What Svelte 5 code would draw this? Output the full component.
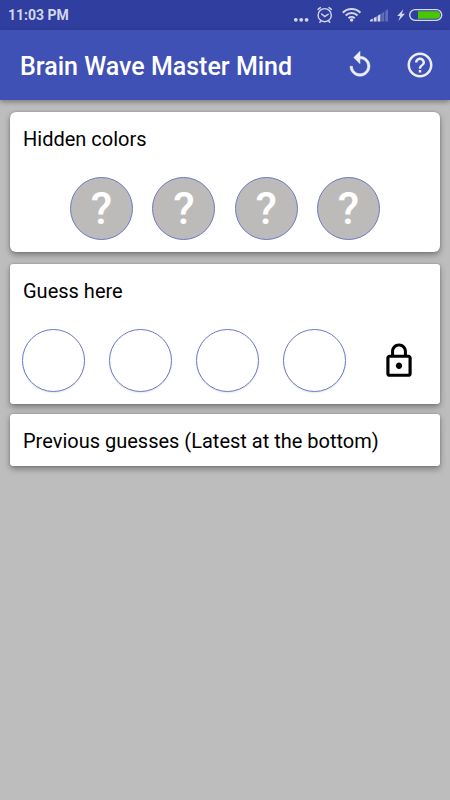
<script lang="ts">
    let hidden = $state(["?", "?", "?", "?"]);
    let guess = $state(["", "", "", ""]);

    function reset() {
        guess = guess.map(() => "");
    }
</script>

<div class="screen">
    <div class="status">
        <span class="time">11:03 PM</span>
        <svg class="system" viewBox="0 0 156 30" width="156" height="30" aria-hidden="true">
            <g fill="#d3d6ec">
                <circle cx="1.8" cy="19.8" r="1.9" />
                <circle cx="7.2" cy="19.8" r="1.9" />
                <circle cx="12.6" cy="19.8" r="1.9" />
            </g>
            <!-- alarm -->
            <g fill="none" stroke="#d3d6ec" stroke-width="1.4" stroke-linecap="round">
                <circle cx="30.7" cy="15.2" r="6.6" />
                <path d="M24 9.4 26.4 7.6M37.4 9.4 35 7.6M27.6 14l3.2 2.6 3.4-2.4M27 21l-1.2 1.2M34.6 21l1.2 1.2" />
            </g>
            <!-- wifi -->
            <g fill="none" stroke="#d3d6ec" stroke-width="2">
                <path d="M48.8 12.8a12.2 12.2 0 0 1 17.6 0" />
                <path d="M51.7 15.5a8.4 8.4 0 0 1 11.8 0" />
                <path d="M54.5 18.2a4.6 4.6 0 0 1 6.2 0" />
            </g>
            <circle cx="57.6" cy="20" r="1.7" fill="#d3d6ec" />
            <!-- signal -->
            <g fill="#d3d6ec">
                <path d="M76 21.5v-1.6l2.8-1.3v2.9zM79.8 21.5v-3.4l2.8-1.6v5zM83.6 21.5v-5.6l2.8-1.8v7.4z" />
                <path opacity=".3" d="M87.4 21.5v-8l2.8-1.8v9.8zM91.2 21.5V11l2.8-2v12.5z" />
            </g>
            <path d="M109.4 9.2l-6.2 6.8h3l-1.8 5 6.6-7.2h-3.2z" fill="#d3d6ec" />
            <!-- battery -->
            <rect x="115.7" y="9.6" width="32" height="10.8" rx="5.4" fill="none" stroke="#d3d6ec" stroke-width="1.4" />
            <path d="M124 11.2h18.4a3.8 3.8 0 0 1 0 7.6H124z" fill="#49c600" />
        </svg>
    </div>

    <header>
        <h1>Brain Wave Master Mind</h1>
        <button class="action" aria-label="Restart" onclick={reset}>
            <svg class="restart" viewBox="0 0 24 24" width="30" height="30">
                <path d="M12 5V1L7 6l5 5V7c3.31 0 6 2.69 6 6s-2.69 6-6 6-6-2.69-6-6H4c0 4.42 3.58 8 8 8s8-3.58 8-8-3.58-8-8-8z" />
            </svg>
        </button>
        <button class="action" aria-label="Help">
            <svg viewBox="0 0 24 24" width="30" height="30">
                <path d="M11 18h2v-2h-2v2zm1-16C6.48 2 2 6.48 2 12s4.48 10 10 10 10-4.48 10-10S17.52 2 12 2zm0 18c-4.41 0-8-3.59-8-8s3.59-8 8-8 8 3.59 8 8-3.59 8-8 8zm0-14c-2.21 0-4 1.79-4 4h2c0-1.1.9-2 2-2s2 .9 2 2c0 2-3 1.75-3 5h2c0-2.25 3-2.5 3-5 0-2.21-1.79-4-4-4z" />
            </svg>
        </button>
    </header>

    <main>
        <section class="card rounded">
            <h2>Hidden colors</h2>
            <div class="pegs hidden">
                {#each hidden as mark}
                    <span class="peg">{mark}</span>
                {/each}
            </div>
        </section>

        <section class="card">
            <h2>Guess here</h2>
            <div class="pegs">
                {#each guess as _, i}
                    <button class="peg empty" aria-label={`Guess color ${i + 1}`}></button>
                {/each}
                <button class="lock" aria-label="Lock guess">
                    <svg viewBox="0 0 24 24" width="38" height="38">
                        <path d="M12 17c1.1 0 2-.9 2-2s-.9-2-2-2-2 .9-2 2 .9 2 2 2zm6-9h-1V6c0-2.76-2.24-5-5-5S7 3.24 7 6v2H6c-1.1 0-2 .9-2 2v10c0 1.1.9 2 2 2h12c1.1 0 2-.9 2-2V10c0-1.1-.9-2-2-2zM8.9 6c0-1.71 1.39-3.1 3.1-3.1s3.1 1.39 3.1 3.1v2H8.9V6zM18 20H6V10h12v10z" />
                    </svg>
                </button>
            </div>
        </section>

        <section class="card previous">
            <h2>Previous guesses (Latest at the bottom)</h2>
        </section>
    </main>
</div>

<style>
    :global(body) {
        background: #bdbdbd;
    }

    .screen {
        font-family: Roboto, sans-serif;
        color: #000;
    }

    .status {
        display: flex;
        align-items: center;
        justify-content: space-between;
        height: 30px;
        padding-left: 8px;
        background: #303f9f;
    }
    .time {
        color: #d3d6ec;
        font-size: 14px;
        font-weight: 700;
    }
    .system {
        display: block;
    }

    header {
        display: flex;
        align-items: center;
        height: 70px;
        padding-left: 20px;
        background: #3f51b5;
        box-shadow: 0 2px 5px rgba(0, 0, 0, 0.35);
    }
    h1 {
        flex: 1;
        margin: 0;
        padding-top: 4px;
        color: #fff;
        font-size: 25px;
        font-weight: 500;
        line-height: 32px;
    }

    button {
        display: flex;
        align-items: center;
        justify-content: center;
        padding: 0;
        border: 0;
        background: none;
        cursor: pointer;
    }
    .action {
        width: 60px;
        height: 60px;
    }
    .action svg {
        fill: #fff;
        opacity: 0.9;
    }
    .restart {
        stroke: #fff;
        stroke-width: 0.4;
    }

    main {
        padding: 12px 10px;
    }
    .card {
        margin-bottom: 12px;
        padding: 13px 12px 12px;
        border-radius: 3px;
        background: #fff;
        box-shadow: 0 3px 6px rgba(0, 0, 0, 0.35), 0 0 2px rgba(0, 0, 0, 0.25);
    }
    .rounded {
        border-radius: 6px;
    }
    .previous {
        margin-top: -2px;
        padding-bottom: 11px;
    }
    h2 {
        margin: 0;
        padding-left: 1px;
        font-size: 20px;
        font-weight: 400;
        line-height: 28px;
    }

    .pegs {
        display: flex;
        align-items: center;
        gap: 24px;
        margin-top: 24px;
    }
    .hidden {
        justify-content: space-between;
        gap: 0;
        padding: 0 48px;
    }
    .peg {
        display: flex;
        align-items: center;
        justify-content: center;
        box-sizing: border-box;
        width: 63px;
        height: 63px;
        border: 1px solid #6d79c4;
        border-radius: 50%;
        background: #bdbbba;
        color: #fff;
        font-size: 44px;
        font-weight: 500;
    }
    .empty {
        background: #fff;
        box-shadow: 0 1px 2px rgba(0, 0, 0, 0.1);
    }
    .lock {
        flex: 1;
        height: 63px;
    }
</style>
